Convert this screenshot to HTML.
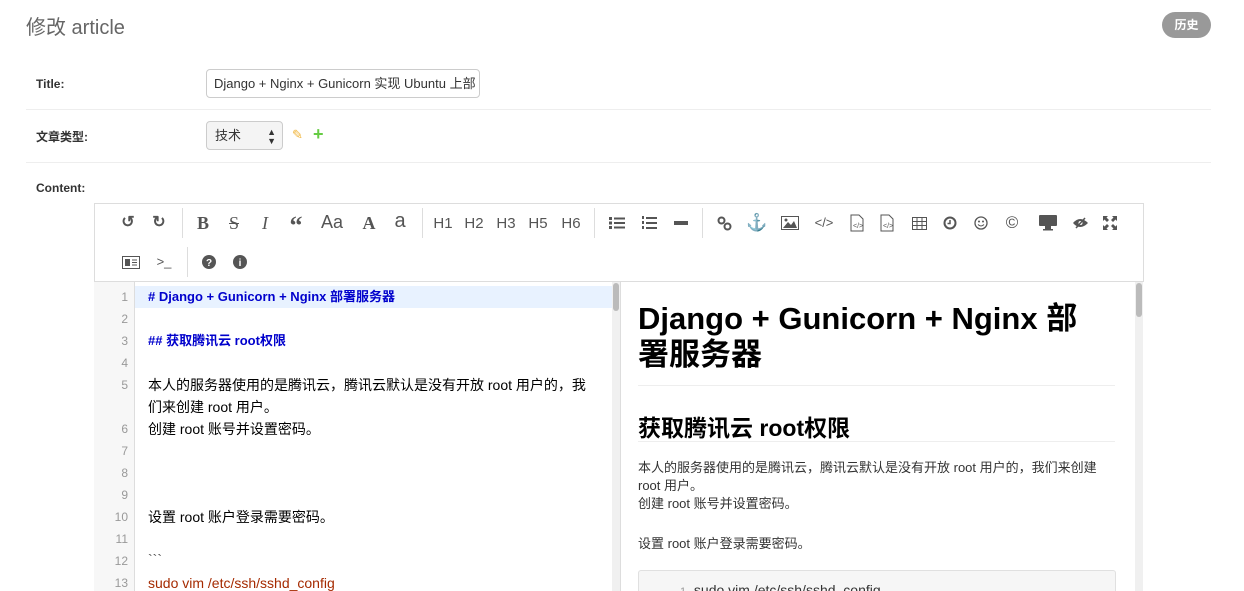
<!DOCTYPE html>
<html><head><meta charset="utf-8"><style>
*{margin:0;padding:0;box-sizing:border-box}
html,body{width:1244px;height:591px;overflow:hidden}
body{background:#fff;font-family:"Liberation Sans","Noto Sans CJK SC",sans-serif;position:relative;color:#333}
.a{position:absolute}
.lbl{font-size:12px;font-weight:bold;color:#333}
.hr{position:absolute;left:26px;width:1185px;height:1px;background:#eee}
.ic{position:absolute;transform:translateX(-50%);color:#555;font-size:16px;line-height:20px;text-align:center;white-space:nowrap}
.sep{position:absolute;width:1px;height:30px;background:#ddd}
.ln{position:absolute;left:94px;width:34px;text-align:right;font-size:12px;color:#999;line-height:22px}
.cl{position:absolute;left:148px;font-size:14px;line-height:22px;color:#000;white-space:nowrap}
</style></head><body>
<div class="a" style="left:26px;top:11px;font-size:20px;color:#666">修改 article</div>
<div class="a" style="left:1162px;top:12px;width:49px;height:26px;border-radius:13px;background:#999;color:#fff;font-size:12px;font-weight:bold;text-align:center;line-height:26px">历史</div>

<div class="a lbl" style="left:36px;top:77px">Title:</div>
<div class="a" style="left:206px;top:69px;width:274px;height:29px;border:1px solid #ccc;border-radius:4px;font-size:13px;line-height:27px;padding-left:7px;color:#333;white-space:nowrap;overflow:hidden">Django + Nginx + Gunicorn 实现 Ubuntu 上部</div>
<div class="hr" style="top:109px"></div>

<div class="a lbl" style="left:36px;top:128px">文章类型:</div>
<div class="a" style="left:206px;top:121px;width:77px;height:29px;border:1px solid #ccc;border-radius:4px;background:#f4f4f4;font-size:13px;line-height:27px;padding-left:8px">技术<span style="position:absolute;right:6px;font-size:9px;line-height:9px;top:6px">▲<br>▼</span></div>
<div class="a" style="left:292px;top:127px;color:#f0b43a;font-size:13px">✎</div>
<div class="a" style="left:313px;top:124px;color:#6c4;font-size:18px;font-weight:bold">+</div>
<div class="hr" style="top:162px"></div>

<div class="a lbl" style="left:36px;top:181px">Content:</div>

<div class="a" style="left:94px;top:203px;width:1050px;height:400px;border:1px solid #ddd"></div>
<div class="a" style="left:94px;top:281px;width:1050px;height:1px;background:#ddd"></div>

<div class="ic" style="left:128px;top:213px;font-weight:bold">↺</div>
<div class="ic" style="left:159px;top:213px;font-weight:bold">↻</div>
<div class="sep" style="left:182px;top:208px"></div>
<div class="ic" style="left:203px;top:213px;font-family:'Liberation Serif';font-weight:bold;font-size:18px">B</div>
<div class="ic" style="left:234px;top:213px;font-family:'Liberation Serif';font-size:18px;text-decoration:line-through">S</div>
<div class="ic" style="left:265px;top:213px;font-family:'Liberation Serif';font-style:italic;font-size:18px">I</div>
<div class="ic" style="left:296px;top:213px;font-family:'Liberation Serif';font-weight:bold;font-size:26px;line-height:26px">“</div>
<div class="ic" style="left:332px;top:212px;font-size:18px">Aa</div>
<div class="ic" style="left:369px;top:213px;font-family:'Liberation Serif';font-weight:bold;font-size:18px">A</div>
<div class="ic" style="left:400px;top:211px;font-size:20px">a</div>
<div class="sep" style="left:422px;top:208px"></div>
<div class="ic" style="left:443px;top:214px;font-size:15px">H1</div>
<div class="ic" style="left:474px;top:214px;font-size:15px">H2</div>
<div class="ic" style="left:506px;top:214px;font-size:15px">H3</div>
<div class="ic" style="left:538px;top:214px;font-size:15px">H5</div>
<div class="ic" style="left:571px;top:214px;font-size:15px">H6</div>
<div class="sep" style="left:594px;top:208px"></div>
<svg class="a" style="left:609px;top:216px" width="16" height="14" fill="#555"><rect x="0" y="1" width="3" height="3"/><rect x="5" y="1.5" width="11" height="2"/><rect x="0" y="5.5" width="3" height="3"/><rect x="5" y="6" width="11" height="2"/><rect x="0" y="10" width="3" height="3"/><rect x="5" y="10.5" width="11" height="2"/></svg>
<svg class="a" style="left:641px;top:215px" width="16" height="16" fill="#555"><rect x="5" y="2" width="11" height="2"/><rect x="5" y="7" width="11" height="2"/><rect x="5" y="12" width="11" height="2"/><rect x="1" y="1" width="2" height="3"/><rect x="1" y="6" width="2" height="3"/><rect x="1" y="11" width="2" height="3"/></svg>
<div class="a" style="left:674px;top:221px;width:14px;height:4px;background:#555"></div>
<div class="sep" style="left:702px;top:208px"></div>
<svg class="a" style="left:717px;top:216px" width="15" height="15" fill="none" stroke="#555" stroke-width="2"><circle cx="4.5" cy="4.5" r="3"/><circle cx="10.5" cy="10.5" r="3"/></svg>
<div class="ic" style="left:757px;top:213px;font-size:17px">⚓</div>
<svg class="a" style="left:781px;top:216px" width="18" height="14"><rect x="0.5" y="0.5" width="17" height="13" fill="none" stroke="#555"/><path d="M2 12 L7 6 L10 9 L13 5 L16 12Z" fill="#555"/><circle cx="5" cy="4" r="1.5" fill="#555"/></svg>
<div class="ic" style="left:824px;top:213px;font-size:13px">&lt;/&gt;</div>
<svg class="a" style="left:850px;top:214px" width="14" height="18"><path d="M1 1h8l4 4v12H1z" fill="none" stroke="#555"/><text x="3" y="14" font-size="7" fill="#555">&lt;/&gt;</text></svg>
<svg class="a" style="left:880px;top:214px" width="14" height="18"><path d="M1 1h8l4 4v12H1z" fill="none" stroke="#555"/><text x="3" y="14" font-size="7" fill="#555">&lt;/&gt;</text></svg>
<svg class="a" style="left:912px;top:217px" width="15" height="13" fill="none" stroke="#555"><rect x="0.5" y="0.5" width="14" height="12"/><path d="M0 4.5h15M0 8.5h15M5 0v13M10 0v13"/></svg>
<svg class="a" style="left:943px;top:216px" width="14" height="14"><circle cx="7" cy="7" r="5.5" fill="none" stroke="#555" stroke-width="2"/><path d="M7 4v3.5H4.5" stroke="#555" stroke-width="1.5" fill="none"/></svg>
<svg class="a" style="left:974px;top:216px" width="14" height="14"><circle cx="7" cy="7" r="6" fill="none" stroke="#555" stroke-width="1.3"/><circle cx="5" cy="5.5" r="1" fill="#555"/><circle cx="9" cy="5.5" r="1" fill="#555"/><path d="M4 8.5q3 3 6 0" stroke="#555" fill="none"/></svg>
<div class="ic" style="left:1012px;top:213px;font-size:17px">©</div>
<svg class="a" style="left:1039px;top:215px" width="18" height="16" fill="#555"><rect x="0" y="0" width="18" height="11" rx="1"/><rect x="6" y="11" width="6" height="3"/><rect x="4" y="14" width="10" height="1.5"/></svg>
<svg class="a" style="left:1072px;top:217px" width="17" height="12"><path d="M1 6q7-8 15 0q-8 8-15 0z" fill="#555"/><circle cx="8.5" cy="6" r="2" fill="#fff"/><path d="M4 11L13 1" stroke="#555" stroke-width="1.5"/></svg>
<svg class="a" style="left:1103px;top:216px" width="14" height="14" fill="#555"><path d="M0 0h5L3.5 1.5 6 4 4 6 1.5 3.5 0 5zM14 0v5l-1.5-1.5L10 6 8 4l2.5-2.5L9 0zM0 14V9l1.5 1.5L4 8l2 2-2.5 2.5L5 14zM14 14H9l1.5-1.5L8 10l2-2 2.5 2.5L14 9z"/></svg>
<svg class="a" style="left:122px;top:256px" width="18" height="13"><rect x="0.5" y="0.5" width="17" height="12" fill="none" stroke="#555"/><rect x="3" y="3" width="5" height="7" fill="#555"/><path d="M10 4h5M10 6.5h5M10 9h5" stroke="#555"/></svg>
<div class="ic" style="left:164px;top:252px;font-size:13px">&gt;_</div>
<div class="sep" style="left:187px;top:247px"></div>
<svg class="a" style="left:202px;top:255px" width="14" height="14"><circle cx="7" cy="7" r="7" fill="#555"/><text x="7" y="11" font-size="10" font-weight="bold" fill="#fff" text-anchor="middle">?</text></svg>
<svg class="a" style="left:233px;top:255px" width="14" height="14"><circle cx="7" cy="7" r="7" fill="#555"/><text x="7" y="11" font-size="10" font-weight="bold" fill="#fff" text-anchor="middle">i</text></svg>

<div class="a" style="left:94px;top:282px;width:41px;height:309px;background:#f7f7f7;border-right:1px solid #ddd"></div>
<div class="a" style="left:135px;top:286px;width:477px;height:22px;background:#e8f2ff"></div>
<div class="a" style="left:612px;top:282px;width:8px;height:309px;background:#f0f0f0"></div>
<div class="a" style="left:613px;top:283px;width:6px;height:28px;background:#bbb;border-radius:3px"></div>
<div class="ln" style="top:286px">1</div><div class="ln" style="top:308px">2</div><div class="ln" style="top:330px">3</div><div class="ln" style="top:352px">4</div><div class="ln" style="top:374px">5</div><div class="ln" style="top:418px">6</div><div class="ln" style="top:440px">7</div><div class="ln" style="top:462px">8</div><div class="ln" style="top:484px">9</div><div class="ln" style="top:506px">10</div><div class="ln" style="top:528px">11</div><div class="ln" style="top:550px">12</div><div class="ln" style="top:572px">13</div>
<div class="cl" style="top:286px;color:#00c;font-weight:bold;font-size:13px">#&nbsp;Django + Gunicorn + Nginx 部署服务器</div>
<div class="cl" style="top:330px;color:#00c;font-weight:bold;font-size:13px">## 获取腾讯云 root权限</div>
<div class="cl" style="top:374px">本人的服务器使用的是腾讯云，腾讯云默认是没有开放 root 用户的，我</div>
<div class="cl" style="top:396px">们来创建 root 用户。</div>
<div class="cl" style="top:418px">创建 root 账号并设置密码。</div>
<div class="cl" style="top:506px">设置 root 账户登录需要密码。</div>
<div class="cl" style="top:548px;color:#555">&#96;&#96;&#96;</div>
<div class="cl" style="top:572px;color:#a52a00">sudo vim /etc/ssh/sshd_config</div>

<div class="a" style="left:620px;top:282px;width:524px;height:309px;background:#fff;border-left:1px solid #ddd"></div>
<div class="a" style="left:1135px;top:282px;width:8px;height:309px;background:#f0f0f0"></div>
<div class="a" style="left:1136px;top:283px;width:6px;height:34px;background:#bbb;border-radius:3px"></div>
<div class="a" style="left:638px;top:301px;font-size:31px;font-weight:bold;line-height:36px;color:#000;width:475px">Django + Gunicorn + Nginx 部<br>署服务器</div>
<div class="a" style="left:638px;top:385px;width:477px;height:1px;background:#eee"></div>
<div class="a" style="left:638px;top:409px;font-size:23px;font-weight:bold;color:#000">获取腾讯云 root权限</div>
<div class="a" style="left:638px;top:441px;width:477px;height:1px;background:#eee"></div>
<div class="a" style="left:638px;top:459px;font-size:13px;line-height:18px;color:#333;width:480px;white-space:nowrap">本人的服务器使用的是腾讯云，腾讯云默认是没有开放 root 用户的，我们来创建<br>root 用户。<br>创建 root 账号并设置密码。</div>
<div class="a" style="left:638px;top:535px;font-size:13px;line-height:18px;color:#333">设置 root 账户登录需要密码。</div>
<div class="a" style="left:638px;top:570px;width:478px;height:30px;background:#f6f6f6;border:1px solid #e0e0e0;border-radius:3px"></div>
<div class="a" style="left:680px;top:582px;font-size:14px;color:#333;white-space:nowrap"><span style="color:#999;font-size:11px">1</span>&nbsp;&nbsp;sudo vim /etc/ssh/sshd_config</div>
</body></html>
